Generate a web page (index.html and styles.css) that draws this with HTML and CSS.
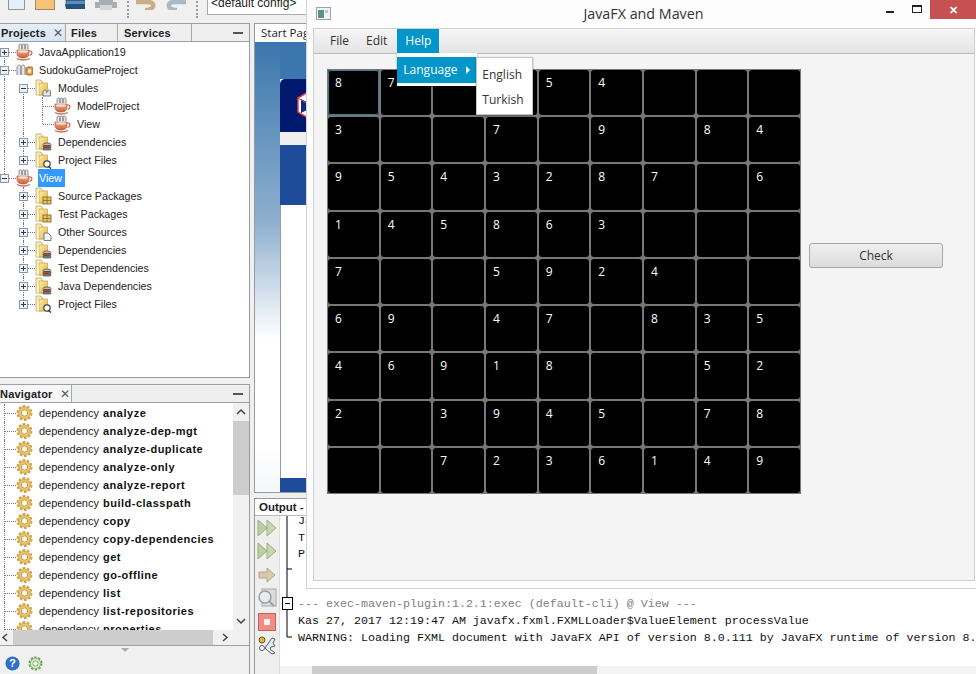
FILE: index.html
```html
<!DOCTYPE html>
<html lang="en">
<head>
<meta charset="utf-8">
<title>JavaFX and Maven</title>
<link rel="stylesheet" href="styles.css">
</head>
<body>
<svg class="sprite" aria-hidden="true">
  <defs>
    <linearGradient id="gf" x1="0" y1="0" x2="1" y2="1"><stop offset="0" stop-color="#ffeeaa"/><stop offset="1" stop-color="#e2b23e"/></linearGradient>
    <linearGradient id="gc" x1="0" y1="0" x2="0" y2="1"><stop offset="0" stop-color="#f0b090"/><stop offset="1" stop-color="#c8603f"/></linearGradient>
    <radialGradient id="gg"><stop offset="0" stop-color="#fff0c0"/><stop offset="1" stop-color="#e6b654"/></radialGradient>
    <symbol id="cup" viewBox="0 0 17 18">
      <path d="M3 6V2.500C3 1 4 1 4.500 1S6 1 6 2.500V6M6 6V2.500C6 1 7 1 7.500 1S9 1 9 2.500V6M9 6V2.500C9 1 10 1 10.500 1S12 1 12 2.500V6" fill="#e2e5e8" stroke="#7d8288" stroke-width=".9"/>
      <path d="M1 7h12v3c0 4-3 5-6 5s-6-1-6-5z" fill="url(#gc)" stroke="#b0583c" stroke-width=".7"/>
      <path d="M13 8h1.500c2 0 2 4-1 4.500" fill="none" stroke="#c06a4c" stroke-width="1.200"/>
      <path d="M1 15.500c3 2 9 2 13 0" fill="none" stroke="#cc7457" stroke-width="1.300"/>
      <ellipse cx="7" cy="8.500" rx="5" ry="1.200" fill="#fbe0d0"/>
    </symbol>
    <symbol id="maven" viewBox="0 0 17 18">
      <path d="M1 14V7C1 4 3 4 3.500 4S5 4.500 5 7v7M5 14V7c0-3 2-3 2.500-3S9 4.500 9 7v7" fill="#e2e5e8" stroke="#7d8288" stroke-width=".9"/>
      <rect x="10" y="6" width="7" height="8" rx="2" fill="#e7a04c" stroke="#9a5a1a" stroke-width=".9"/>
      <rect x="12" y="8.500" width="3" height="3" fill="#fff2dc"/>
    </symbol>
    <symbol id="folder" viewBox="0 0 17 18">
      <path d="M1 1h5l2 3v12H1z" fill="#fbeeb8" stroke="#b8a468" stroke-width=".8"/>
      <path d="M4 4h8.500V16H4z" fill="url(#gf)" stroke="#c0a44c" stroke-width=".7"/>
      <path d="M1.500 15.500l2.500-11v11z" fill="#fff6d2"/>
    </symbol>
    <symbol id="fold-maven" viewBox="0 0 17 18">
      <use href="#folder"/>
      <path d="M8 17v-4c0-2 1.500-2 2-2s1.500 0 1.500 2 1.500-2 2-2 2 0 2 2v4z" fill="#dfe3e6" stroke="#5f666d" stroke-width=".8"/>
    </symbol>
    <symbol id="fold-deps" viewBox="0 0 17 18">
      <use href="#folder"/>
      <ellipse cx="12" cy="11.500" rx="4" ry="1.500" fill="#c6c0b8" stroke="#4f4a46" stroke-width=".8"/>
      <rect x="8" y="12.500" width="8" height="2" rx="1" fill="#a9584a" stroke="#4f3a36" stroke-width=".7"/>
      <rect x="8" y="15" width="8" height="2" rx="1" fill="#8d8983" stroke="#45413d" stroke-width=".7"/>
    </symbol>
    <symbol id="fold-files" viewBox="0 0 17 18">
      <use href="#folder"/>
      <circle cx="12" cy="13" r="3.200" fill="#fff" stroke="#3b3f44" stroke-width="1.200"/>
      <path d="M13 15l3 2.500" stroke="#3b3f44" stroke-width="1.600"/>
    </symbol>
    <symbol id="fold-pkg" viewBox="0 0 17 18">
      <use href="#folder"/>
      <rect x="8" y="10" width="8" height="7" fill="#e6c26c" stroke="#8a6a24" stroke-width=".9"/>
      <path d="M8 13.500h8M12 10v7" stroke="#8a6a24" stroke-width=".8"/>
    </symbol>
    <symbol id="fold-doc" viewBox="0 0 17 18">
      <use href="#folder"/>
      <path d="M9 10h4l3 3v4.500H9z" fill="#eef3f8" stroke="#68717a" stroke-width=".9"/>
    </symbol>
    <symbol id="gear" viewBox="0 0 17 17">
      <circle cx="8.500" cy="8.500" r="7" fill="none" stroke="#d4a548" stroke-width="2" stroke-dasharray="2.700 1.700"/>
      <circle cx="8.500" cy="8.500" r="6" fill="url(#gg)" stroke="#c49a42" stroke-width=".7"/>
      <circle cx="8.500" cy="8.500" r="3.200" fill="#fffbea" stroke="#b98f3c" stroke-width=".9"/>
    </symbol>
    <symbol id="ff" viewBox="0 0 20 20">
      <path d="M1 2l9 8-9 8z" fill="#bcd0a4" stroke="#97ae80"/>
      <path d="M10 2l9 8-9 8z" fill="#c7d8ae" stroke="#97ae80"/>
    </symbol>
  </defs>
</svg>

<div class="desktop">
  <div class="ide">
    <div class="toolbar">
      <svg class="tool w17" viewBox="0 0 17 20"><rect x=".5" y=".5" width="16" height="19" fill="#e6eef7" stroke="#8e959c"/></svg>
      <svg class="tool" viewBox="0 0 20 20"><rect x=".5" y=".5" width="19" height="19" fill="#f6c277" stroke="#a88a5c"/></svg>
      <svg class="tool" viewBox="0 0 20 20"><path d="M0 0h20v19H1z" fill="#33608c"/><path d="M0 14h20v5H1z" fill="#27527c"/><path d="M2 11h18v3H1z" fill="#5c8cb8"/></svg>
      <svg class="tool w22" viewBox="0 0 22 20"><path d="M4 0h14v12h4v6H0v-6h4z" fill="#a9aeb1"/><rect x="5" y="15" width="12" height="5" fill="#d3d6d8"/></svg>
      <span class="sep"></span>
      <svg class="tool" viewBox="0 0 20 20"><path d="M0 12H11C16 12 18 14 17 16.500 16 19 13 20 9 20" fill="none" stroke="#c9ae88" stroke-width="4.500"/></svg>
      <svg class="tool" viewBox="0 0 20 20"><path d="M20 12H9C4 12 2 14 3 16.500 4 19 7 20 11 20" fill="none" stroke="#a9bac6" stroke-width="4.500"/></svg>
      <span class="sep"></span>
      <div class="combo">&lt;default config&gt;</div>
    </div>

    <div class="ide-main">
      <div class="left-col">
        <section class="projects">
          <div class="tabs">
            <div class="tab tab-active">Projects<span class="tab-x">✕</span></div>
            <div class="tab tab-files">Files</div>
            <div class="tab tab-services">Services</div>
            <div class="tab-fill"><span class="dash"></span></div>
          </div>
          <ul class="tree">
            <li class="row"><span class="cell dn"><b class="toggle plus"></b></span><svg class="ico"><use href="#cup"/></svg><span class="label">JavaApplication19</span></li>
            <li class="row"><span class="cell v"><b class="toggle minus"></b></span><svg class="ico"><use href="#maven"/></svg><span class="label">SudokuGameProject</span></li>
            <li class="row"><span class="cell v"></span><span class="cell dn"><b class="toggle minus"></b></span><svg class="ico"><use href="#fold-maven"/></svg><span class="label">Modules</span></li>
            <li class="row"><span class="cell v"></span><span class="cell v"></span><span class="cell v hook"></span><svg class="ico"><use href="#cup"/></svg><span class="label">ModelProject</span></li>
            <li class="row"><span class="cell v"></span><span class="cell v"></span><span class="cell up hook"></span><svg class="ico"><use href="#cup"/></svg><span class="label">View</span></li>
            <li class="row"><span class="cell v"></span><span class="cell v"><b class="toggle plus"></b></span><svg class="ico"><use href="#fold-deps"/></svg><span class="label">Dependencies</span></li>
            <li class="row"><span class="cell v"></span><span class="cell up"><b class="toggle plus"></b></span><svg class="ico"><use href="#fold-files"/></svg><span class="label">Project Files</span></li>
            <li class="row"><span class="cell up"><b class="toggle minus"></b></span><svg class="ico"><use href="#cup"/></svg><span class="label label-selected">View</span></li>
            <li class="row"><span class="cell"></span><span class="cell v"><b class="toggle plus"></b></span><svg class="ico"><use href="#fold-pkg"/></svg><span class="label">Source Packages</span></li>
            <li class="row"><span class="cell"></span><span class="cell v"><b class="toggle plus"></b></span><svg class="ico"><use href="#fold-pkg"/></svg><span class="label">Test Packages</span></li>
            <li class="row"><span class="cell"></span><span class="cell v"><b class="toggle plus"></b></span><svg class="ico"><use href="#fold-doc"/></svg><span class="label">Other Sources</span></li>
            <li class="row"><span class="cell"></span><span class="cell v"><b class="toggle plus"></b></span><svg class="ico"><use href="#fold-deps"/></svg><span class="label">Dependencies</span></li>
            <li class="row"><span class="cell"></span><span class="cell v"><b class="toggle plus"></b></span><svg class="ico"><use href="#fold-deps"/></svg><span class="label">Test Dependencies</span></li>
            <li class="row"><span class="cell"></span><span class="cell v"><b class="toggle plus"></b></span><svg class="ico"><use href="#fold-deps"/></svg><span class="label">Java Dependencies</span></li>
            <li class="row"><span class="cell"></span><span class="cell up"><b class="toggle plus"></b></span><svg class="ico"><use href="#fold-files"/></svg><span class="label">Project Files</span></li>
          </ul>
        </section>

        <section class="navigator">
          <div class="tabs">
            <div class="tab tab-nav">Navigator<span class="tab-x">✕</span></div>
            <div class="tab-fill"><span class="dash"></span></div>
          </div>
          <div class="nav-body">
            <ul class="nav-list">
              <li class="row"><span class="cell v hook"></span><svg class="ico"><use href="#gear"/></svg><span class="label">dependency <b>analyze</b></span></li>
              <li class="row"><span class="cell v hook"></span><svg class="ico"><use href="#gear"/></svg><span class="label">dependency <b>analyze-dep-mgt</b></span></li>
              <li class="row"><span class="cell v hook"></span><svg class="ico"><use href="#gear"/></svg><span class="label">dependency <b>analyze-duplicate</b></span></li>
              <li class="row"><span class="cell v hook"></span><svg class="ico"><use href="#gear"/></svg><span class="label">dependency <b>analyze-only</b></span></li>
              <li class="row"><span class="cell v hook"></span><svg class="ico"><use href="#gear"/></svg><span class="label">dependency <b>analyze-report</b></span></li>
              <li class="row"><span class="cell v hook"></span><svg class="ico"><use href="#gear"/></svg><span class="label">dependency <b>build-classpath</b></span></li>
              <li class="row"><span class="cell v hook"></span><svg class="ico"><use href="#gear"/></svg><span class="label">dependency <b>copy</b></span></li>
              <li class="row"><span class="cell v hook"></span><svg class="ico"><use href="#gear"/></svg><span class="label">dependency <b>copy-dependencies</b></span></li>
              <li class="row"><span class="cell v hook"></span><svg class="ico"><use href="#gear"/></svg><span class="label">dependency <b>get</b></span></li>
              <li class="row"><span class="cell v hook"></span><svg class="ico"><use href="#gear"/></svg><span class="label">dependency <b>go-offline</b></span></li>
              <li class="row"><span class="cell v hook"></span><svg class="ico"><use href="#gear"/></svg><span class="label">dependency <b>list</b></span></li>
              <li class="row"><span class="cell v hook"></span><svg class="ico"><use href="#gear"/></svg><span class="label">dependency <b>list-repositories</b></span></li>
              <li class="row"><span class="cell v hook"></span><svg class="ico"><use href="#gear"/></svg><span class="label">dependency <b>properties</b></span></li>
            </ul>
            <div class="vscroll">
              <svg class="chev" viewBox="0 0 16 16"><path d="M4 10l4-4 4 4" fill="none" stroke="#444" stroke-width="1.500"/></svg>
              <div class="vthumb"></div>
              <svg class="chev chev-end" viewBox="0 0 16 16"><path d="M4 6l4 4 4-4" fill="none" stroke="#444" stroke-width="1.500"/></svg>
            </div>
          </div>
          <div class="hscroll">
            <svg class="chev-h" viewBox="0 0 13 15"><path d="M7 4L3 7.500 7 11" fill="none" stroke="#444" stroke-width="1.500"/></svg>
            <div class="hthumb"></div>
            <svg class="chev-h chev-right" viewBox="0 0 13 15"><path d="M6 4l4 3.500L6 11" fill="none" stroke="#444" stroke-width="1.500"/></svg>
          </div>
          <div class="grip"><span class="grip-arrow"></span></div>
          <div class="nav-footer">
            <svg class="foot-ico" viewBox="0 0 16 16"><circle cx="8" cy="8" r="7.500" fill="#2f6fc4"/><text x="8" y="12" class="help-q">?</text></svg>
            <svg class="foot-ico" viewBox="0 0 17 17"><circle cx="8.500" cy="8.500" r="7" fill="none" stroke="#6aa355" stroke-width="2" stroke-dasharray="2.700 1.700"/><circle cx="8.500" cy="8.500" r="5.800" fill="#d6ebc6" stroke="#6aa355" stroke-width=".8"/><circle cx="8.500" cy="8.500" r="3" fill="#f5fbf0" stroke="#6aa355"/></svg>
          </div>
        </section>
      </div>

      <div class="right-col">
        <section class="start">
          <div class="start-tab">Start Page</div>
          <div class="start-page">
            <div class="start-side"></div>
            <div class="start-content">
              <div class="banner">
                <svg class="banner-logo" viewBox="0 0 24 28"><path d="M12 1l10 6v14l-10 6-10-6V7z" fill="#fff" stroke="#e0464e" stroke-width="1.500"/><path d="M5 8l14 7-14 7z" fill="#0a2a86"/><path d="M2 7l10 6 10-6M12 13v14" fill="none" stroke="#e0464e"/></svg>
              </div>
              <div class="banner-strip"></div>
              <div class="banner-blue"></div>
              <div class="start-white"></div>
              <div class="start-foot"></div>
            </div>
          </div>
        </section>

        <section class="output">
          <div class="output-tab">Output - View (run)</div>
          <div class="output-body">
            <div class="output-tools">
              <svg class="otool"><use href="#ff"/></svg>
              <svg class="otool"><use href="#ff"/></svg>
              <svg class="otool" viewBox="0 0 20 20"><path d="M2 7h8V3l8 7-8 7v-4H2z" fill="#d6caa8" stroke="#b2a684"/></svg>
              <svg class="otool" viewBox="0 0 20 20"><rect x="5" y="1" width="14" height="17" fill="#dcdcdc" stroke="#a8a8a8"/><circle cx="8" cy="9" r="6" fill="#e8ecef" stroke="#9aa0a4" stroke-width="1.500"/><path d="M12 13l5 5" stroke="#9aa0a4" stroke-width="2"/></svg>
              <svg class="otool" viewBox="0 0 20 20"><rect x="1.500" y="1.500" width="17" height="17" fill="#ef8c84" stroke="#c9605a"/><rect x="7" y="7" width="6" height="6" fill="#fdf0ee"/></svg>
              <svg class="otool" viewBox="0 0 20 20"><circle cx="5" cy="5" r="3" fill="#e2b040" stroke="#6b5a20"/><circle cx="5" cy="13" r="2.500" fill="#fff" stroke="#55616a"/><path d="M8 13L15 3l3 1-2 4 2 3-4 1-1 2 5 4-3 1-5-4z" fill="#e6eef2" stroke="#55616a"/></svg>
            </div>
            <div class="output-main">
              <div class="output-text">
                <svg class="fold" viewBox="0 0 18 158"><path d="M7 0v81M7 93v28h5M7 53h5" fill="none" stroke="#000"/><rect x="2.500" y="81.500" width="10" height="12" fill="#fff" stroke="#000"/><path d="M5 87.500h5" stroke="#000"/></svg>
                <div class="log">
                  <div class="log-line">JavaFX</div>
                  <div class="log-line">TI</div>
                  <div class="log-line">P</div>
                  <div class="log-line">&nbsp;</div>
                  <div class="log-line">&nbsp;</div>
                  <div class="log-line log-muted">--- exec-maven-plugin:1.2.1:exec (default-cli) @ View ---</div>
                  <div class="log-line">Kas 27, 2017 12:19:47 AM javafx.fxml.FXMLLoader$ValueElement processValue</div>
                  <div class="log-line">WARNING: Loading FXML document with JavaFX API of version 8.0.111 by JavaFX runtime of version 8.0.101</div>
                </div>
              </div>
              <div class="output-hscroll"><div class="output-thumb"></div></div>
            </div>
          </div>
        </section>
      </div>
    </div>
  </div>

  <div class="fx-window">
    <div class="titlebar">
      <svg class="win-ico" viewBox="0 0 15 13"><rect x=".5" y=".5" width="14" height="12" fill="#f4f6f6" stroke="#9aa2a6"/><rect x="2" y="3" width="6" height="8" fill="#5f9088"/><rect x="9" y="3" width="3" height="3" fill="#b9c8cc"/></svg>
      <span class="win-title">JavaFX and Maven</span>
      <div class="win-controls">
        <span class="win-min"></span>
        <span class="win-max"></span>
        <span class="win-close">✕</span>
      </div>
    </div>
    <div class="fx-root">
      <div class="menubar">
        <div class="menu">File</div>
        <div class="menu menu-edit">Edit</div>
        <div class="menu menu-open">Help
          <div class="dropdown">
            <div class="drop-item">Language<span class="drop-arrow"></span>
              <div class="submenu">
                <div class="sub-item">English</div>
                <div class="sub-item">Turkish</div>
              </div>
            </div>
          </div>
        </div>
      </div>
      <div class="fx-content">
        <div class="board">
          <div class="sq sq-focus">8</div><div class="sq">7</div><div class="sq"></div><div class="sq"></div><div class="sq">5</div><div class="sq">4</div><div class="sq"></div><div class="sq"></div><div class="sq"></div>
          <div class="sq">3</div><div class="sq"></div><div class="sq"></div><div class="sq">7</div><div class="sq"></div><div class="sq">9</div><div class="sq"></div><div class="sq">8</div><div class="sq">4</div>
          <div class="sq">9</div><div class="sq">5</div><div class="sq">4</div><div class="sq">3</div><div class="sq">2</div><div class="sq">8</div><div class="sq">7</div><div class="sq"></div><div class="sq">6</div>
          <div class="sq">1</div><div class="sq">4</div><div class="sq">5</div><div class="sq">8</div><div class="sq">6</div><div class="sq">3</div><div class="sq"></div><div class="sq"></div><div class="sq"></div>
          <div class="sq">7</div><div class="sq"></div><div class="sq"></div><div class="sq">5</div><div class="sq">9</div><div class="sq">2</div><div class="sq">4</div><div class="sq"></div><div class="sq"></div>
          <div class="sq">6</div><div class="sq">9</div><div class="sq"></div><div class="sq">4</div><div class="sq">7</div><div class="sq"></div><div class="sq">8</div><div class="sq">3</div><div class="sq">5</div>
          <div class="sq">4</div><div class="sq">6</div><div class="sq">9</div><div class="sq">1</div><div class="sq">8</div><div class="sq"></div><div class="sq"></div><div class="sq">5</div><div class="sq">2</div>
          <div class="sq">2</div><div class="sq"></div><div class="sq">3</div><div class="sq">9</div><div class="sq">4</div><div class="sq">5</div><div class="sq"></div><div class="sq">7</div><div class="sq">8</div>
          <div class="sq"></div><div class="sq"></div><div class="sq">7</div><div class="sq">2</div><div class="sq">3</div><div class="sq">6</div><div class="sq">1</div><div class="sq">4</div><div class="sq">9</div>
        </div>
        <button class="check" type="button">Check</button>
      </div>
    </div>
  </div>
</div>
</body>
</html>
```

FILE: styles.css
```css
* { box-sizing: border-box; }
html, body { margin: 0; padding: 0; }
body { background: #f0f0f0; font-family: "Liberation Sans", sans-serif; color: #222; }
ul { list-style: none; margin: 0; padding: 0; }
.sprite { position: absolute; width: 0; height: 0; }

.desktop { position: relative; width: 976px; height: 674px; overflow: hidden; }
.ide { width: 976px; height: 674px; display: flex; flex-direction: column; font-family: "Liberation Sans", sans-serif; font-size: 11px; }

/* top toolbar */
.toolbar { height: 23px; flex: none; display: flex; align-items: flex-end; gap: 10px; padding: 0 0 13px 8px; overflow: hidden; }
.tool { width: 20px; height: 20px; flex: none; }
.tool.w17 { width: 17px; }
.tool.w22 { width: 22px; }
.sep { width: 2px; height: 20px; flex: none; margin-right: -3px; margin-bottom: -8px; border-left: 2px dotted #999; }
.combo { width: 140px; height: 18px; flex: none; margin-left: 2px; margin-bottom: -5px; padding: 0 0 0 3px; background: #fff; border: 1px solid #aaa; font-size: 12px; line-height: 10px; white-space: nowrap; }

.ide-main { flex: 1; min-height: 0; display: flex; gap: 4px; }
.left-col { width: 250px; flex: none; display: flex; flex-direction: column; gap: 6px; }
.right-col { flex: 1; min-width: 0; display: flex; flex-direction: column; gap: 5px; }

/* tool windows */
.projects { height: 355px; flex: none; display: flex; flex-direction: column; background: #fff; border-right: 1px solid #9a9a9a; border-bottom: 1px solid #9a9a9a; }
.navigator { flex: 1; min-height: 0; display: flex; flex-direction: column; border-right: 1px solid #9a9a9a; }
.tabs { height: 19px; flex: none; display: flex; background: #efefef; border-top: 1px solid #9aa0a6; border-bottom: 1px solid #9aa0a6; }
.tab { height: 100%; display: flex; align-items: center; font-weight: 700; font-size: 11px; letter-spacing: .2px; color: #222; white-space: nowrap; border-right: 1px solid #a8a8a8; }
.tab-active { width: 66px; padding-left: 1px; background: linear-gradient(#e6eff9, #d7e4f1); }
.tab-files { width: 52px; padding-left: 5px; }
.tab-services { width: 74px; padding-left: 6px; }
.tab-nav { width: 72px; background: #f7f7f7; }
.tab-x { margin-left: 7px; font-size: 12px; font-weight: 400; color: #555; letter-spacing: 0; }
.tab-fill { flex: 1; display: flex; align-items: center; justify-content: flex-end; padding-right: 6px; }
.dash { width: 10px; height: 2px; background: #555; }

/* trees */
.tree { flex: 1; padding-top: 1px; overflow: hidden; background: #fff; }
.row { display: flex; align-items: center; height: 18px; white-space: nowrap; }
.cell { position: relative; width: 19px; height: 18px; flex: none; }
.cell::before { content: ""; position: absolute; left: 4px; width: 0; border-left: 1px dotted transparent; }
.cell.v::before { top: 0; bottom: 0; border-left-color: #777; }
.cell.up::before { top: 0; bottom: 9px; border-left-color: #777; }
.cell.dn::before { top: 9px; bottom: 0; border-left-color: #777; }
.cell.hook::after, .toggle::after { content: ""; position: absolute; top: 9px; height: 0; border-top: 1px dotted #777; }
.cell.hook::after { left: 5px; width: 11px; }
.toggle { position: absolute; left: 0; top: 5px; width: 9px; height: 9px; border: 1px solid #8c97a6; background-color: #eef1f5; background-repeat: no-repeat; }
.toggle::after { left: 8px; top: 3px; width: 7px; }
.plus { background-image: linear-gradient(#2c3a4c, #2c3a4c), linear-gradient(#2c3a4c, #2c3a4c); background-size: 5px 1px, 1px 5px; background-position: 1px 3px, 3px 1px; }
.minus { background-image: linear-gradient(#2c3a4c, #2c3a4c); background-size: 5px 1px; background-position: 1px 3px; }
.ico { width: 17px; height: 18px; flex: none; margin-left: -3px; margin-right: 5px; }
.label { display: block; line-height: 18px; padding: 0 1px; color: #222; font-size: 10.700px; }
.label b { font-weight: 700; color: #111; letter-spacing: .5px; }
.label-selected { background: #3399ff; color: #fff; padding: 0 3px 0 1px; }

/* navigator */
.nav-body { height: 227px; flex: none; display: flex; background: #fff; }
.nav-list { flex: 1; min-width: 0; height: 227px; padding-top: 1px; overflow: hidden; }
.nav-list .label { font-size: 11px; word-spacing: 1px; }
.vscroll { width: 16px; flex: none; display: flex; flex-direction: column; background: #f1f1f1; }
.chev { width: 16px; height: 18px; flex: none; }
.chev-end { margin-top: auto; }
.vthumb { height: 74px; flex: none; background: #cdcdcd; }
.hscroll { height: 16px; flex: none; display: flex; align-items: stretch; background: #f1f1f1; border-bottom: 1px solid #a0a0a0; }
.chev-h { width: 13px; height: 15px; flex: none; }
.chev-right { margin-left: auto; margin-right: 19px; }
.hthumb { width: 200px; flex: none; background: #cdcdcd; }
.grip { height: 9px; flex: none; display: flex; justify-content: center; padding-top: 2px; }
.grip-arrow { width: 0; height: 0; border-left: 4px solid transparent; border-right: 4px solid transparent; border-top: 4px solid #aaa; }
.nav-footer { flex: 1; display: flex; align-items: flex-start; gap: 8px; padding-left: 5px; padding-top: 1px; }
.foot-ico { width: 15px; height: 15px; flex: none; }
.help-q { font-size: 12px; font-weight: 700; fill: #fff; text-anchor: middle; }

/* start page */
.start { height: 470px; flex: none; display: flex; flex-direction: column; border-left: 1px solid #9a9a9a; border-top: 1px solid #9a9a9a; border-bottom: 1px solid #9a9a9a; background: #fff; }
.start-tab { height: 18px; flex: none; padding-left: 6px; font-family: "Open Sans", sans-serif; font-size: 11.500px; line-height: 17px; white-space: nowrap; background: #fff; }
.start-page { flex: 1; min-height: 0; display: flex; }
.start-side { width: 25px; flex: none; background: linear-gradient(#3b76ae 0, #8fb0cf 40%, #ffffff 66%, #ffffff 90%, #f4f8fb 100%); }
.start-content { flex: 1; display: flex; flex-direction: column; background: linear-gradient(#3b76ae 37px, #fff 37px); padding-top: 37px; }
.banner { height: 53px; flex: none; padding: 12px 0 0 15px; background: #00186e; border-top-left-radius: 5px; }
.banner-logo { display: block; width: 26px; height: 28px; }
.banner-strip { height: 13px; flex: none; background: #efefef; }
.banner-blue { height: 60px; flex: none; background: #1e4c98; }
.start-white { flex: 1; background: #fff; border-left: 1px solid #9a9a9a; }
.start-foot { height: 14px; flex: none; background: #1e4c98; }

/* output */
.output { flex: 1; min-height: 0; display: flex; flex-direction: column; border-left: 1px solid #9a9a9a; background: #fff; }
.output-tab { height: 18px; flex: none; padding-left: 4px; font-weight: 700; font-size: 11.500px; line-height: 17px; background: #fff; border-top: 1px solid #9a9a9a; border-bottom: 1px solid #bbb; white-space: nowrap; }
.output-body { flex: 1; min-height: 0; display: flex; }
.output-tools { width: 25px; flex: none; display: flex; flex-direction: column; align-items: center; gap: 3.400px; padding-top: 2px; background: #efefef; border-right: 1px solid #ddd; }
.otool { width: 20px; height: 20px; flex: none; }
.output-main { flex: 1; min-width: 0; display: flex; flex-direction: column; }
.output-text { flex: 1; min-height: 0; display: flex; overflow: hidden; background: #fff; }
.fold { width: 18px; height: 158px; flex: none; }
.log { flex: 1; min-width: 0; margin-top: -3px; font-family: "Liberation Mono", monospace; font-size: 11.660px; line-height: 16.670px; color: #111; overflow: hidden; }
.log-line { white-space: pre; }
.log-muted { color: #808080; }
.output-hscroll { height: 8px; flex: none; padding-left: 32px; background: #f3f3f3; }
.output-thumb { width: 285px; height: 100%; background: #cdcdcd; }

/* JavaFX window */
.fx-window { position: absolute; left: 306px; top: 0; width: 670px; height: 589px; display: flex; flex-direction: column; background: #fdfdfd; border-left: 1px solid #d4d4d4; border-bottom: 1px solid #cfcfcf; font-family: "Open Sans", "Liberation Sans", sans-serif; font-size: 12px; }
.titlebar { position: relative; height: 28px; flex: none; display: flex; align-items: center; justify-content: center; }
.win-ico { position: absolute; left: 9px; top: 7px; width: 15px; height: 13px; }
.win-title { font-size: 14.300px; line-height: 28px; color: #333; margin-left: 4px; }
.win-controls { position: absolute; right: 0; top: 0; display: flex; align-items: flex-start; }
.win-min { width: 8px; height: 2px; margin: 11px 18px 0 0; background: #222; }
.win-max { width: 10px; height: 8px; margin: 5px 8px 0 0; border: 1px solid #222; border-top-width: 2px; }
.win-close { width: 46px; height: 19px; background: #c75050; color: #fff; font-size: 11px; line-height: 19px; text-align: center; font-weight: 700; }
.fx-root { flex: 1; min-height: 0; margin: 0 1px 7px 6px; display: flex; flex-direction: column; background: #f4f4f4; border: 1px solid #cfcfcf; }
.menubar { height: 25px; flex: none; display: flex; gap: 1px; padding-left: 8px; background: linear-gradient(#f6f6f6, #e4e4e4); border-bottom: 1px solid #bcbcbc; }
.menu { position: relative; height: 24px; padding: 0 8px; line-height: 24px; color: #333; font-size: 12px; }
.menu-edit { padding-right: 9px; }
.menu-open { background: #0096c9; color: #fff; }
.dropdown { position: absolute; left: 0; top: 24px; width: 80px; height: 33px; padding: 4px 0 3px; background: #fff; box-shadow: 0 1px 2px rgba(0,0,0,.35); z-index: 5; }
.drop-item { position: relative; height: 26px; padding-left: 6px; line-height: 26px; background: #0096c9; color: #fff; font-size: 12px; }
.drop-arrow { position: absolute; left: 69px; top: 9px; width: 0; height: 0; border-top: 4px solid transparent; border-bottom: 4px solid transparent; border-left: 4px solid #fff; }
.submenu { position: absolute; left: 79px; top: 0; width: 57px; height: 58px; padding: 4px 0; background: #fff; border: 1px solid #c4c4c4; box-shadow: 0 1px 2px rgba(0,0,0,.3); z-index: 6; }
.sub-item { height: 25px; padding-left: 5px; line-height: 25px; color: #333; font-size: 12px; }
.fx-content { flex: 1; min-height: 0; display: flex; align-items: flex-start; gap: 8px; padding: 15px 0 0 13px; }
.board { width: 474px; height: 425px; flex: none; display: grid; grid-template-columns: repeat(9, 1fr); grid-template-rows: repeat(9, 1fr); gap: 2px; padding: 1px; background: #777; }
.sq { background: #000; border-radius: 3px; color: #fff; font-size: 12px; line-height: 16px; padding: 5px 0 0 7px; }
.sq-focus { outline: 1px solid #3b7f93; outline-offset: -1px; }
.check { width: 134px; height: 25px; flex: none; margin-top: 174px; padding: 0; background: linear-gradient(#efefef, #dcdcdc); border: 1px solid #a8a8a8; border-radius: 3px; color: #333; font-family: "Open Sans", "Liberation Sans", sans-serif; font-size: 12px; }
```
